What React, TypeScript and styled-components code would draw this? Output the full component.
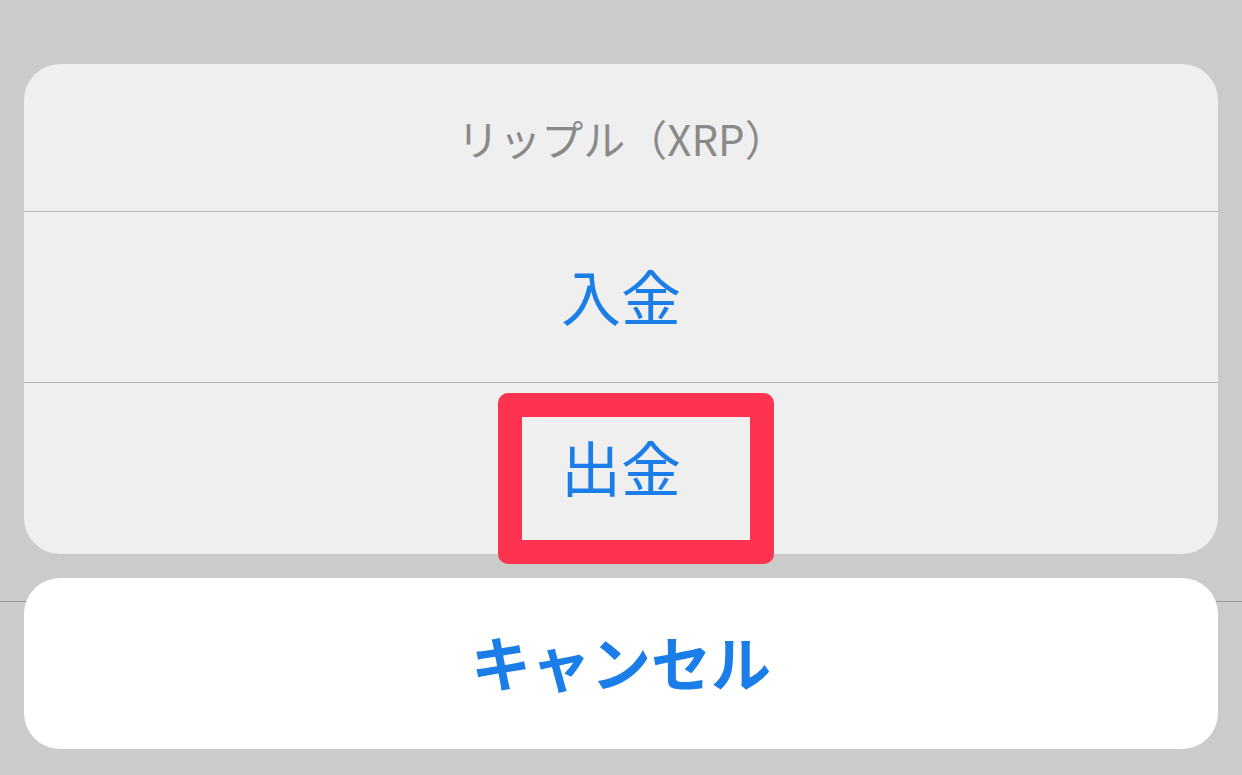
import React, { FC } from "react";
import styled, { createGlobalStyle } from "styled-components";

const GlobalStyle = createGlobalStyle`
    html, body {
        margin: 0;
        padding: 0;
        background: #cbcbcb;
    }
    body {
        font-family: "Noto Sans CJK JP", "Noto Sans", sans-serif;
    }
`;

const Screen = styled.div`
    display: flex;
    flex-direction: column;
    gap: 24px;
    width: 1242px;
    height: 775px;
    padding: 64px 24px 0;
    box-sizing: border-box;
    background: #cbcbcb;
`;

const Sheet = styled.div`
    display: flex;
    flex-direction: column;
    background: #efefef;
    border-radius: 36px;
`;

const Title = styled.div`
    height: 147px;
    display: flex;
    align-items: center;
    justify-content: center;
    padding-left: 2px;
    font-size: 42px;
    color: #8a8a8a;
    border-bottom: 1px solid #b6b6b6;
`;

const Action = styled.div<{ $divider?: boolean }>`
    position: relative;
    height: 171px;
    box-sizing: border-box;
    padding-bottom: 6px;
    display: flex;
    align-items: center;
    justify-content: center;
    font-size: 60px;
    color: #1b7ee8;
    border-bottom: ${(p) => (p.$divider ? "1px solid #b6b6b6" : "none")};
`;

// red annotation frame drawn over the row
const Highlight = styled.div`
    position: absolute;
    top: 10px;
    left: 50%;
    margin-left: -123px;
    width: 276px;
    height: 171px;
    box-sizing: border-box;
    border: 24px solid #fe3350;
    border-radius: 10px;
    pointer-events: none;
`;

const CancelArea = styled.div`
    position: relative;
    &::before {
        content: "";
        position: absolute;
        top: 23px;
        left: -24px;
        right: -24px;
        height: 1px;
        background: #9c9c9c;
    }
`;

const Cancel = styled.div`
    position: relative;
    height: 171px;
    box-sizing: border-box;
    padding-bottom: 6px;
    display: flex;
    align-items: center;
    justify-content: center;
    background: #ffffff;
    border-radius: 36px;
    font-size: 60px;
    font-weight: 700;
    color: #1b7ee8;
`;

const App: FC = () => {
    return (
        <React.Fragment>
            <GlobalStyle />
            <Screen>
                <Sheet>
                    <Title>リップル（XRP）</Title>
                    <Action $divider>入金</Action>
                    <Action>
                        出金
                        <Highlight />
                    </Action>
                </Sheet>
                <CancelArea>
                    <Cancel>キャンセル</Cancel>
                </CancelArea>
            </Screen>
        </React.Fragment>
    );
};

export default App;
